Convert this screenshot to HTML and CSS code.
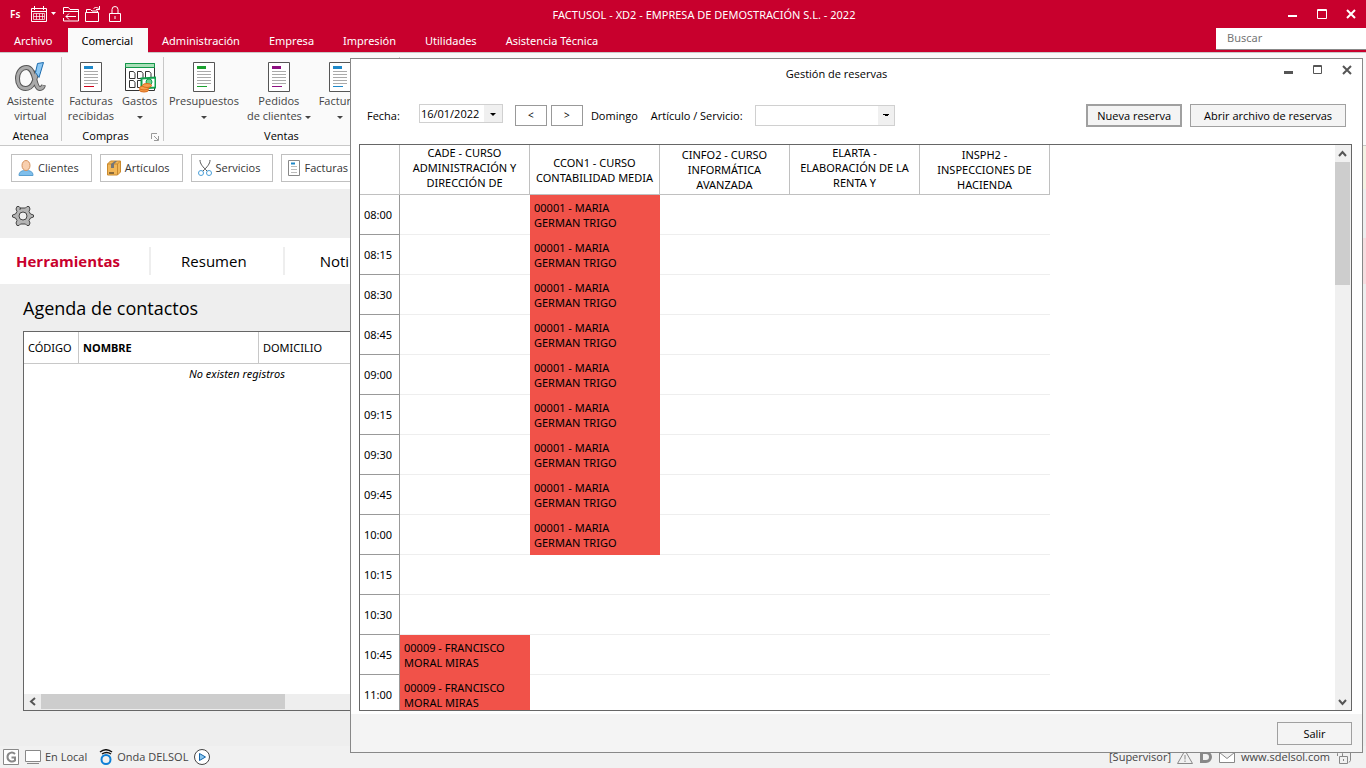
FILE: index.html
```
<!DOCTYPE html>
<html lang="es">
<head>
  <meta charset="UTF-8">
  <meta name="viewport" content="width=device-width, initial-scale=1.0">
  <title>FACTUSOL</title>
  <link rel="stylesheet" href="styles.css">
</head>
<body>

  <header class="titlebar">
    <div class="quick">
      <span class="logo">Fs</span>
      <svg width="26" height="16" viewBox="0 0 26 16" fill="none" stroke="#fff">
        <path d="M.5 2.500h15v13H.5zM.5 5.500h15M3.500 0v4M12.500 0v4"/>
        <path d="M2.500 7.500h11v6h-11zM2.500 10.500h11M5.500 7.500v6M8.500 7.500v6M11.500 7.500v6" stroke-opacity=".7"/>
        <path d="M20 6h5l-2.500 3z" fill="#fff" stroke="none"/>
      </svg>
      <svg width="16" height="16" viewBox="0 0 16 16" fill="none" stroke="#fff">
        <path d="M.5 8V1.500h5l1.500 2h8.500V15H.5v-3M.5 5.500h15M3 10.500h10M6 7.500l-3 3 3 3"/>
      </svg>
      <svg width="16" height="16" viewBox="0 0 16 16" fill="none" stroke="#fff">
        <path d="M.5 6.500h13v9H.5zM1.500 6V3.500h4l1.500 1.500h5.500v1.500M8.500 3c1-2 3.500-2 6 0M14.500 0v3.500H11"/>
      </svg>
      <svg class="lock" width="12" height="16" viewBox="0 0 12 16" fill="none" stroke="#fff">
        <path d="M.5 7.500h11v8H.5zM3 7V3.500a3 3 0 0 1 6 0V7M6 10v3"/>
      </svg>
    </div>
    <h1>FACTUSOL - XD2 - EMPRESA DE DEMOSTRACIÓN S.L. - 2022</h1>
    <div class="winbtns">
      <button aria-label="Minimizar"><svg width="10" height="10" stroke="#fff" stroke-width="2"><path d="M0 7h9"/></svg></button>
      <button aria-label="Maximizar"><svg width="10" height="10" stroke="#fff" fill="none"><path d="M.5.5h9v9h-9zM0 1.500h10"/></svg></button>
      <button aria-label="Cerrar"><svg width="10" height="10" stroke="#fff" stroke-width="2"><path d="M1 1l8 8M9 1l-8 8"/></svg></button>
    </div>
  </header>

  <nav class="menu">
    <a href="#">Archivo</a>
    <a href="#" class="active">Comercial</a>
    <a href="#">Administración</a>
    <a href="#">Empresa</a>
    <a href="#">Impresión</a>
    <a href="#">Utilidades</a>
    <a href="#">Asistencia Técnica</a>
    <input class="search" type="text" placeholder="Buscar" aria-label="Buscar">
  </nav>

  <section class="ribbon">
    <div class="group atenea">
      <div class="tools">
        <button class="tool">
          <svg width="32" height="32" viewBox="0 0 32 32" fill="none">
            <path d="M23 10C21 19 19 27.500 11.500 27.500 6.500 27.500 3.500 23.500 3.500 17.500S7 6.500 12.500 6.500c9.500 0 7 21 13.500 21 2 0 3-1.500 3.500-3.500" stroke="#555" stroke-width="5"/>
            <path d="M23 11C21 19 19 27.500 11.500 27.500 6.500 27.500 3.500 23.500 3.500 17.500S7 6.500 12.500 6.500c9.500 0 7 21 13.500 21 2 0 3-1.500 3.500-3" stroke="#aaa" stroke-width="3"/>
            <path d="M23.500 2.500l6-1L25 16.500l-3.500-5z" fill="#8cc8f4" stroke="#1d6cae"/>
          </svg>
          <span>Asistente<br>virtual</span>
        </button>
      </div>
      <p>Atenea</p>
    </div>
    <div class="group compras">
      <div class="tools">
        <button class="tool">
          <svg width="22" height="32" viewBox="0 0 22 32"><path d="M.5 1.500h21v29H.5z" fill="#fff" stroke="#555"/><path d="M4 5h9v3H4z" fill="#1e88c9"/><path d="M4 10.500h14M4 13.500h14M4 16.500h14M4 19.500h14M4 22.500h14" stroke="#aaa"/><path d="M4 25.500h10" stroke="#d0021b"/></svg>
          <span>Facturas<br>recibidas</span>
        </button>
        <button class="tool">
          <svg width="32" height="32" viewBox="0 0 32 32" fill="none">
            <path d="M1.500 2.500h29v27h-29z" fill="#fff" stroke="#333"/>
            <path d="M1.500 2.500h29v4h-29z" fill="#a9dfb8" stroke="#12994a"/>
            <path d="M5.500 10.500h4l1.500 2v5H5.500zM13.500 10.500h4l1.500 2v5h-5.500zM21.500 10.500h4l1.500 2v5h-5.500zM5.500 19.500h4l1.500 2v5H5.500zM13.500 19.500h4l1.500 2v5h-5.500z" stroke="#333"/>
            <path d="M17.500 17.500l14-1v10l-14 1z" fill="#fff" stroke="#12a04c" stroke-width="2"/>
            <circle cx="25" cy="21" r="3" fill="#6fd08e" stroke="#12a04c"/>
            <g fill="#f5a04c" stroke="#d9691b"><ellipse cx="20" cy="29" rx="4.500" ry="2"/><ellipse cx="20" cy="27" rx="4.500" ry="2"/><ellipse cx="23" cy="24.500" rx="4.500" ry="2"/></g>
          </svg>
          <span>Gastos<br><i class="caret"></i></span>
        </button>
      </div>
      <p>Compras</p>
      <svg class="launcher" width="8" height="8" fill="none" stroke="#999"><path d="M.5 6V.5H6M3 3l4 4M7.500 3v4.500H3"/></svg>
    </div>
    <div class="group ventas">
      <div class="tools">
        <button class="tool">
          <svg width="22" height="32" viewBox="0 0 22 32"><path d="M.5 1.500h21v29H.5z" fill="#fff" stroke="#555"/><path d="M4 5h9v3H4z" fill="#1ba12f"/><path d="M4 10.500h14M4 13.500h14M4 16.500h14M4 19.500h14M4 22.500h14" stroke="#aaa"/><path d="M4 25.500h10" stroke="#1ba12f"/></svg>
          <span>Presupuestos<br><i class="caret"></i></span>
        </button>
        <button class="tool">
          <svg width="22" height="32" viewBox="0 0 22 32"><path d="M.5 1.500h21v29H.5z" fill="#fff" stroke="#555"/><path d="M4 5h9v3H4z" fill="#8d0f80"/><path d="M4 10.500h14M4 13.500h14M4 16.500h14M4 19.500h14M4 22.500h14" stroke="#aaa"/><path d="M4 25.500h10" stroke="#8d0f80"/></svg>
          <span>Pedidos<br>de clientes <i class="caret"></i></span>
        </button>
        <button class="tool">
          <svg width="22" height="32" viewBox="0 0 22 32"><path d="M.5 1.500h21v29H.5z" fill="#fff" stroke="#555"/><path d="M4 5h9v3H4z" fill="#1e88c9"/><path d="M4 10.500h14M4 13.500h14M4 16.500h14M4 19.500h14M4 22.500h14" stroke="#aaa"/><path d="M4 25.500h10" stroke="#1e88c9"/></svg>
          <span>Facturas<br><i class="caret"></i></span>
        </button>
      </div>
      <p>Ventas</p>
    </div>
  </section>

  <section class="shortcuts">
    <button>
      <svg width="16" height="16" viewBox="0 0 16 16"><path d="M1 15.500c0-4 3-5 7-5s7 1 7 5z" fill="#7fbfec" stroke="#5a9fd0"/><ellipse cx="8" cy="5.500" rx="4" ry="5" fill="#f8cfae" stroke="#d3925e"/></svg>
      Clientes
    </button>
    <button>
      <svg width="14" height="16" viewBox="0 0 14 16"><path d="M.5 4l3-3h10v11l-3 3H.5z" fill="#f2b758" stroke="#c98a2e"/><path d="M.5 4h10v11M10.500 4l3-3" fill="none" stroke="#c98a2e"/><path d="M4 4l4-3h2L7 4v4H4z" fill="#777"/><path d="M2 12h5v2H2z" fill="#8a6a3a"/></svg>
      Artículos
    </button>
    <button>
      <svg width="14" height="16" viewBox="0 0 14 16" fill="none"><path d="M2 0c0 4 3 7 7 11M12 0c0 4-3 7-7 11" stroke="#555"/><circle cx="3" cy="13" r="2.500" stroke="#4a9fd8"/><circle cx="11" cy="13" r="2.500" stroke="#4a9fd8"/></svg>
      Servicios
    </button>
    <button>
      <svg width="12" height="16" viewBox="0 0 12 16"><path d="M.5.5h11v15H.5z" fill="#fff" stroke="#888"/><path d="M3 3.500h4" stroke="#1e88c9" stroke-width="2"/><path d="M3 6.500h6M3 9.500h6M3 12.500h6" stroke="#bbb"/></svg>
      Facturas
    </button>
  </section>

  <div class="gearbar">
    <svg width="22" height="22" viewBox="0 0 22 22" fill="#b4b4b4" stroke="#444" stroke-linejoin="round">
      <path d="M8 4.500 8.500 3 7 1.500H5L4 4l1 2.500L3.500 9 .5 10v2l3 1L5 15.500 4 18l1 2.500h2L8.500 19h5l1.500 1.500h2l1-2.500-1-2.500 1.500-2.500 3-1v-2l-3-1L17 6.500 18 4l-1-2.500h-2L13.500 3h-5z"/>
      <circle cx="11" cy="11" r="4" fill="#eee"/>
    </svg>
  </div>

  <nav class="panels">
    <a href="#" class="active">Herramientas</a>
    <a href="#">Resumen</a>
    <a href="#">Noti</a>
  </nav>

  <main class="agenda">
    <h2>Agenda de contactos</h2>
    <div class="contacts">
      <table>
        <thead>
          <tr><th class="codigo">CÓDIGO</th><th class="nombre">NOMBRE</th><th>DOMICILIO</th></tr>
        </thead>
      </table>
      <p>No existen registros</p>
      <div class="hscroll">
        <svg width="17" height="15" fill="none" stroke="#555" stroke-width="2"><path d="M11 4L7 7.500l4 3.500"/></svg>
        <div class="thumb"></div>
      </div>
    </div>
  </main>

  <footer class="status">
    <svg width="16" height="16"><path d="M.5.5h15v15H.5z" fill="#fff" stroke="#888"/><path d="M12 5C9.500 2.500 4.500 3.500 4.500 8s5 5.500 7.500 3.500V8.500H8.500" fill="none" stroke="#888" stroke-width="2"/></svg>
    <svg width="16" height="16"><path d="M.5 1.500h15v11H.5z" fill="#fff" stroke="#888"/><path d="M2 14.500h12" stroke="#888"/></svg>
    <span class="local">En Local</span>
    <svg width="14" height="16" fill="none"><circle cx="7" cy="10.500" r="4.500" stroke="#0e7fd6" stroke-width="2"/><path d="M1 3c4-3 8-3 12 0M3 5c3-2 6-2 9 0" stroke="#111" stroke-width="1.500"/></svg>
    <span>Onda DELSOL</span>
    <svg width="16" height="16"><circle cx="8" cy="8" r="7.500" fill="#fff" stroke="#444"/><path d="M5.500 4.500l6 3.500-6 3.500z" fill="#8cc8f0" stroke="#1565a8"/></svg>
    <span class="user">[Supervisor]</span>
    <svg width="16" height="16" fill="none" stroke="#888"><path d="M8 1.500L15.500 14.500H.5zM8 6v4.500M8 11.500v1.500"/></svg>
    <svg width="14" height="16" fill="none" stroke="#888" stroke-width="3"><path d="M2.500 3.500H7a4.500 4.500 0 0 1 0 9H2.500z"/></svg>
    <svg width="16" height="16" fill="#fff" stroke="#888"><path d="M.5 3.500h15v10H.5zM.5 3.500L8 9.500l7.500-6"/></svg>
    <a href="#">www.sdelsol.com</a>
    <svg width="16" height="16" fill="none" stroke="#888"><path d="M3.500 7.500h8v7h-8zM7.500 10v2M1.500 7V4.500a2.500 2.500 0 0 1 5 0v3M9 2.500h5.500v9l-1.500 2"/></svg>
  </footer>

  <div class="dialog" role="dialog" aria-labelledby="dialog-title">
    <div class="dialog-title">
      <h2 id="dialog-title">Gestión de reservas</h2>
      <div class="winbtns">
        <button aria-label="Minimizar"><svg width="10" height="10" stroke="#555" stroke-width="3"><path d="M0 7.500h9"/></svg></button>
        <button aria-label="Maximizar"><svg width="10" height="10" stroke="#555" fill="none"><path d="M.5.5h8v8h-8zM0 1.500h9"/></svg></button>
        <button aria-label="Cerrar"><svg width="10" height="10" stroke="#555" stroke-width="2"><path d="M1 1l8 8M9 1l-8 8"/></svg></button>
      </div>
    </div>

    <form class="filters">
      <label for="fecha">Fecha:</label>
      <div class="date">
        <input id="fecha" type="text" value="16/01/2022">
        <button type="button" aria-label="Abrir calendario"><i class="caret"></i></button>
      </div>
      <button type="button" class="step">&lt;</button>
      <button type="button" class="step">&gt;</button>
      <span class="day">Domingo</span>
      <label for="articulo">Artículo / Servicio:</label>
      <select id="articulo"><option></option></select>
      <button type="button" class="btn primary">Nueva reserva</button>
      <button type="button" class="btn open">Abrir archivo de reservas</button>
    </form>

    <div class="schedule">
      <div class="rows">
        <table>
          <thead>
            <tr>
              <th class="hour"></th>
              <th class="long">CADE - CURSO ADMINISTRACIÓN Y DIRECCIÓN DE</th>
              <th>CCON1 - CURSO CONTABILIDAD MEDIA</th>
              <th>CINFO2 - CURSO INFORMÁTICA AVANZADA</th>
              <th class="long">ELARTA - ELABORACIÓN DE LA RENTA Y</th>
              <th>INSPH2 - INSPECCIONES DE HACIENDA</th>
            </tr>
          </thead>
          <tbody>
            <tr><th>08:00</th><td></td><td class="busy">00001 - MARIA GERMAN TRIGO</td><td></td><td></td><td></td></tr>
            <tr><th>08:15</th><td></td><td class="busy">00001 - MARIA GERMAN TRIGO</td><td></td><td></td><td></td></tr>
            <tr><th>08:30</th><td></td><td class="busy">00001 - MARIA GERMAN TRIGO</td><td></td><td></td><td></td></tr>
            <tr><th>08:45</th><td></td><td class="busy">00001 - MARIA GERMAN TRIGO</td><td></td><td></td><td></td></tr>
            <tr><th>09:00</th><td></td><td class="busy">00001 - MARIA GERMAN TRIGO</td><td></td><td></td><td></td></tr>
            <tr><th>09:15</th><td></td><td class="busy">00001 - MARIA GERMAN TRIGO</td><td></td><td></td><td></td></tr>
            <tr><th>09:30</th><td></td><td class="busy">00001 - MARIA GERMAN TRIGO</td><td></td><td></td><td></td></tr>
            <tr><th>09:45</th><td></td><td class="busy">00001 - MARIA GERMAN TRIGO</td><td></td><td></td><td></td></tr>
            <tr><th>10:00</th><td></td><td class="busy">00001 - MARIA GERMAN TRIGO</td><td></td><td></td><td></td></tr>
            <tr><th>10:15</th><td></td><td></td><td></td><td></td><td></td></tr>
            <tr><th>10:30</th><td></td><td></td><td></td><td></td><td></td></tr>
            <tr><th>10:45</th><td class="busy">00009 - FRANCISCO MORAL MIRAS</td><td></td><td></td><td></td><td></td></tr>
            <tr><th>11:00</th><td class="busy">00009 - FRANCISCO MORAL MIRAS</td><td></td><td></td><td></td><td></td></tr>
          </tbody>
        </table>
      </div>
      <div class="vscroll">
        <svg width="15" height="17" fill="none" stroke="#555" stroke-width="2"><path d="M4 11l3.500-4 3.500 4"/></svg>
        <div class="thumb"></div>
        <svg class="down" width="15" height="17" fill="none" stroke="#555" stroke-width="2"><path d="M4 7l3.500 4L11 7"/></svg>
      </div>
    </div>

    <div class="dialog-foot">
      <button class="btn">Salir</button>
    </div>
  </div>

</body>
</html>
```
FILE: styles.css
```
*{
  margin: 0;
  padding: 0;
  box-sizing: border-box;
}
body{
  height: 100vh;
  display: flex;
  flex-direction: column;
  overflow: hidden;
  position: relative;
  background-color: #eee;
  color: #000;
  font: 11px/15px "Open Sans", "Noto Sans", sans-serif;
}
button, input, select{
  font: inherit;
  color: inherit;
  border: 0;
  border-radius: 0;
  background: none;
}
a{
  color: inherit;
  text-decoration: none;
}
svg{
  display: block;
  flex: none;
}
h1, h2{
  font-weight: normal;
}
.caret{
  display: inline-block;
  border: 3px solid transparent;
  border-top-color: currentColor;
  border-bottom: 0;
  vertical-align: middle;
}
.titlebar, .menu, .contacts, .rows{
  font-family: "Noto Sans", "Open Sans", sans-serif;
}

/* barra de titulo */
.titlebar{
  height: 28px;
  flex: none;
  display: grid;
  grid-template-columns: 1fr auto 1fr;
  align-items: center;
  background-color: #c8002d;
  color: #fff;
  padding: 0 10px;
}
.titlebar h1{
  font-size: 11px;
  padding-left: 42px;
}
.quick{
  display: flex;
  align-items: center;
  gap: 6px;
}
.logo{
  font-weight: 600;
  font-size: 10px;
  width: 15px;
}
.lock{
  margin-left: 2px;
}
.winbtns{
  display: flex;
  justify-content: flex-end;
  gap: 19px;
}

/* menu */
.menu{
  height: 25px;
  display: flex;
  flex: none;
  background-color: #c8002d;
  border-bottom: 1px solid #c8c8c8;
  color: #fff;
}
.menu a{
  padding: 5px 15px 0 14px;
}
.menu .active{
  background-color: #fafafa;
  color: #000;
  margin-bottom: -1px;
}
.search{
  width: 150px;
  height: 22px;
  margin-left: auto;
  padding: 0 11px 2px;
  background-color: #fff;
  border-bottom: 1px solid #888;
  color: #666;
}

/* ribbon */
.ribbon{
  height: 93px;
  flex: none;
  display: flex;
  background-color: #fafafa;
  border-bottom: 1px solid #c8c8c8;
  padding: 4px 0;
}
.group{
  position: relative;
  display: flex;
  flex-direction: column;
  justify-content: space-between;
  text-align: center;
  border-right: 1px solid #c8c8c8;
}
.group p{
  line-height: 10px;
}
.atenea{
  width: 62px;
}
.compras{
  width: 102px;
}
/* hueco para el icono de la esquina */
.compras p{
  padding-right: 14px;
}
.ventas{
  width: 236px;
}
.tools{
  display: flex;
  justify-content: center;
}
.tool{
  flex: none;
  padding: 4px 4px 0;
  color: #444;
  display: flex;
  flex-direction: column;
  align-items: center;
  white-space: nowrap;
}
.ventas .tools{
  justify-content: flex-start;
  padding-left: 1px;
}
.launcher{
  position: absolute;
  right: 4px;
  bottom: 0;
}

.shortcuts{
  height: 43px;
  flex: none;
  display: flex;
  align-items: center;
  gap: 8px;
  padding: 0 11px;
  background-color: #fff;
  border-right: 3px solid #f3f2e3;
}
.shortcuts button{
  height: 28px;
  display: flex;
  align-items: center;
  gap: 4px;
  padding: 0 12px 0 6px;
  border: 1px solid #c0c0c0;
  color: #333;
}

.gearbar{
  height: 49px;
  flex: none;
  padding: 16px 12px;
}

.panels{
  height: 46px;
  flex: none;
  display: flex;
  align-items: center;
  background-color: #fff;
  border-right: 3px solid #f6dde0;
  font-size: 15px;
  line-height: 28px;
}
.panels a{
  padding: 0 36px 0 30px;
  border-right: 2px solid #eee;
}
.panels a:last-child{
  padding-left: 35px;
  border: 0;
}
.panels .active{
  padding: 0 29px 0 16px;
  font-weight: bold;
  color: #c8002d;
}

/* agenda */
.agenda{
  flex: 1;
  display: flex;
  flex-direction: column;
  padding: 12px 23px 35px;
}
.agenda h2{
  font-size: 18px;
  line-height: 24px;
  padding-bottom: 11px;
}
.contacts{
  flex: 1;
  display: flex;
  flex-direction: column;
  background-color: #fff;
  border: 1px solid #666;
}
.contacts table{
  border-collapse: separate;
  border-spacing: 0;
  table-layout: fixed;
  width: 100%;
}
.contacts th{
  height: 32px;
  padding: 0 4px;
  text-align: left;
  font-weight: normal;
  border-right: 1px solid #c8c8c8;
  border-bottom: 1px solid #c8c8c8;
}
.contacts .codigo{
  width: 55px;
}
.contacts .nombre{
  width: 180px;
  font-weight: bold;
}
.contacts p{
  font-style: italic;
  padding: 2px 165px;
}
.hscroll{
  display: flex;
  height: 16px;
  margin-top: auto;
  background-color: #eee;
}
.hscroll .thumb{
  width: 244px;
  height: 15px;
  background-color: #cdcdcd;
}

/* barra de estado */
.status{
  height: 22px;
  flex: none;
  display: flex;
  align-items: center;
  gap: 6px;
  padding: 0 14px 1px 3px;
  background-color: #f1f1f1;
  color: #444;
}
.status span{
  margin-left: -2px;
}
.local{
  padding-right: 6px;
}
.status .user{
  margin-left: auto;
}

/* ventana de reservas */
.dialog{
  position: absolute;
  top: 58px;
  right: 3px;
  bottom: 15px;
  left: 350px;
  display: flex;
  flex-direction: column;
  background-color: #fff;
  border: 1px solid #888;
}
.dialog-title{
  position: relative;
  padding: 7px 10px 0;
}
.dialog-title h2{
  font-size: 11px;
  text-align: center;
  padding-right: 40px;
}
.dialog-title .winbtns{
  position: absolute;
  top: 6px;
  right: 10px;
}
.filters{
  display: flex;
  align-items: center;
  padding: 23px 16px 17px;
}
.date{
  display: flex;
  width: 84px;
  height: 19px;
  margin: 0 12px 4px 19px;
  border: 1px solid #d0d0d0;
}
.date input{
  width: 64px;
  padding-left: 1px;
}
.date button{
  flex: 1;
  background-color: #f0f0f0;
  line-height: 10px;
}
.step{
  width: 32px;
  height: 21px;
  margin-right: 4px;
  border: 1px solid #999;
  font-size: 10px;
}
.day{
  padding: 0 13px 0 4px;
}
/* flecha con dos triangulos */
.filters select{
  appearance: none;
  width: 140px;
  height: 21px;
  margin: 0 auto 0 12px;
  border: 1px solid #d0d0d0;
  background:
    linear-gradient(to top right, transparent 50%, #000 50%) right 8px center / 3px 3px no-repeat,
    linear-gradient(to top left, transparent 50%, #000 50%) right 5px center / 3px 3px no-repeat,
    linear-gradient(#f0f0f0, #f0f0f0) right / 16px 100% no-repeat;
}
.btn{
  height: 23px;
  min-width: 75px;
  padding: 0 11px;
  border: 1px solid #a0a0a0;
  background-color: #f4f4f4;
}
.primary{
  border-width: 2px;
  padding: 0 9px;
}
.open{
  margin-left: 8px;
  padding: 0 13px;
}

.schedule{
  flex: 1;
  min-height: 0;
  display: flex;
  margin: 0 10px 3px 8px;
  border: 1px solid #666;
}
.rows{
  flex: 1;
  overflow: hidden;
}
.rows table{
  width: 690px;
  table-layout: fixed;
  border-collapse: separate;
  border-spacing: 0;
}
.rows th{
  font-weight: normal;
}
.rows thead th{
  height: 50px;
  padding: 0 2px;
  border-right: 1px solid #c0c0c0;
  border-bottom: 1px solid #c0c0c0;
}
.rows thead .long{
  padding: 0 10px;
  vertical-align: top;
}
.rows .hour{
  width: 40px;
}
.rows tbody th{
  height: 40px;
  padding-left: 4px;
  text-align: left;
  border-right: 1px solid #999;
  border-bottom: 1px solid #999;
}
.rows td{
  padding: 0 4px;
  border-bottom: 1px solid #eee;
}
.rows .busy{
  background-color: #f15249;
  border-color: #f15249;
}
.vscroll{
  display: flex;
  flex-direction: column;
  width: 16px;
  background-color: #f0f0f0;
}
.vscroll .thumb{
  height: 123px;
  width: 15px;
  background-color: #cdcdcd;
}
.down{
  margin-top: auto;
}

.dialog-foot{
  display: flex;
  justify-content: flex-end;
  padding: 8px 10px 7px;
  background-color: #f4f4f4;
}
```
